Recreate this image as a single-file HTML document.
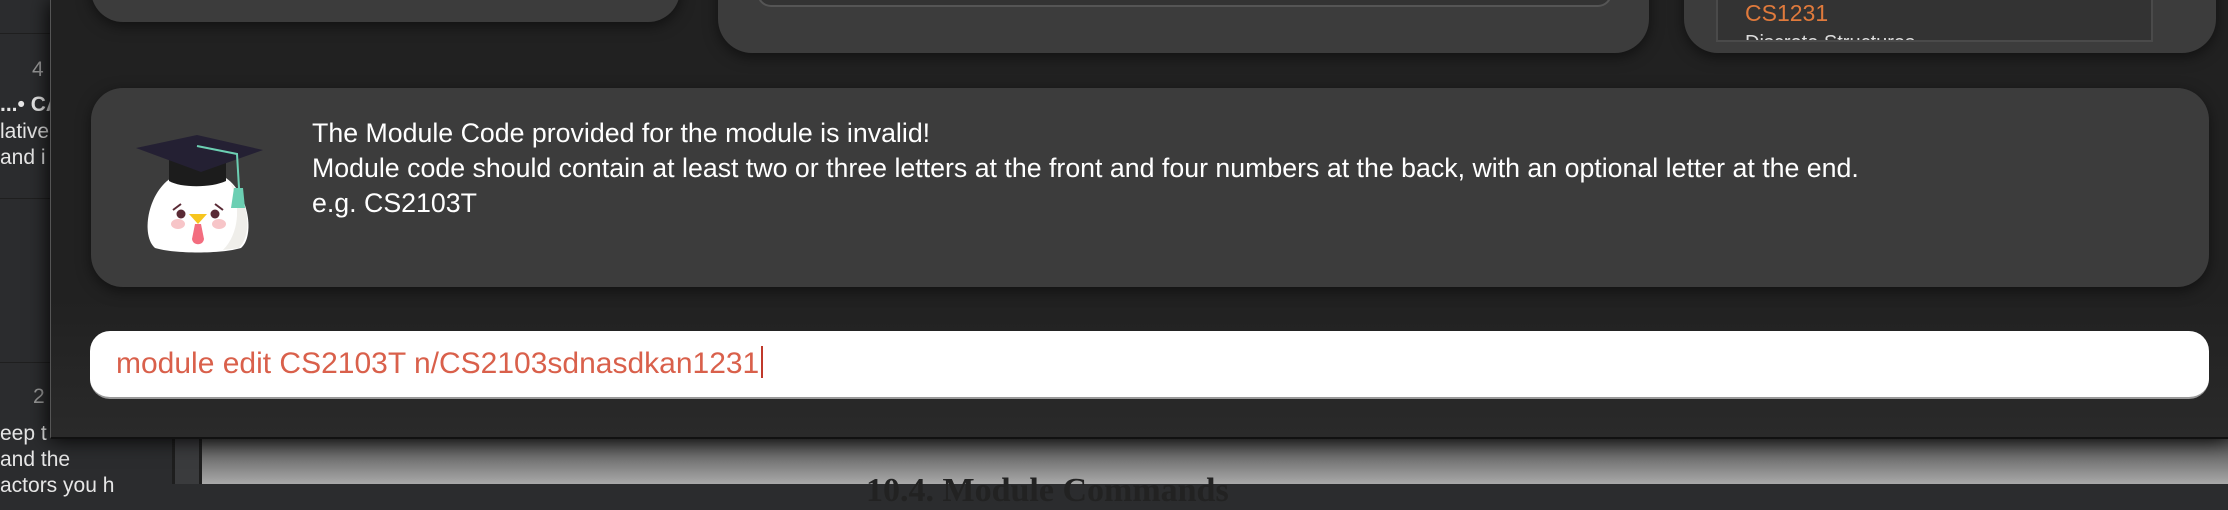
<!DOCTYPE html>
<html><head><meta charset="utf-8"><style>
*{margin:0;padding:0;box-sizing:border-box}
body{width:2228px;height:484px;overflow:hidden;background:#2b2c2e;position:relative;font-family:"Liberation Sans",sans-serif}
.abs{position:absolute}
.side{left:0;top:0;width:172px;height:484px;background:#2b2c2e;color:#e6e6e6;font-size:21px}
.bottom{left:202px;top:439px;width:2026px;height:45px;background:linear-gradient(#4a4a4a,#a9a9a9)}
.col{left:172px;top:439px;width:30px;height:45px;background:#3a3b3d;border-left:3px solid #1e1e1e;border-right:3px solid #1e1e1e}
.win{left:50px;top:0;width:2178px;height:439px;background:linear-gradient(#212121 0,#212121 300px,#2a2a2a 439px);border-left:1px solid #555;border-bottom:2px solid #111;box-shadow:0 0 20px #000}
.card{background:#3c3c3c;box-shadow:0 4px 14px rgba(0,0,0,.5)}
.txt{color:#fff;font-size:27px;line-height:35px;white-space:nowrap;transform-origin:0 0;transform:scaleX(.99)}
</style></head><body>
<div class="abs side">
 <div class="abs" style="left:0;top:33px;width:172px;height:1px;background:#1f1f1f"></div>
 <div class="abs" style="left:0;top:198px;width:172px;height:1px;background:#1f1f1f"></div>
 <div class="abs" style="left:0;top:362px;width:172px;height:1px;background:#1f1f1f"></div>
 <div class="abs" style="left:32px;top:58px;color:#999">4</div>
 <div class="abs" style="left:0;top:93px;font-weight:bold">...• CA</div>
 <div class="abs" style="left:0;top:120px">lative</div>
 <div class="abs" style="left:0;top:146px">and i</div>
 <div class="abs" style="left:33px;top:385px;color:#999">2</div>
 <div class="abs" style="left:0;top:422px">eep t</div>
 <div class="abs" style="left:0;top:448px">and the</div>
 <div class="abs" style="left:0;top:474px">actors you h</div>
</div>
<div class="abs col"></div>
<div class="abs bottom"></div>
<div class="abs" style="left:866px;top:472px;font-family:'Liberation Serif',serif;font-weight:bold;font-size:34px;color:#222">10.4. Module Commands</div>
<div class="abs win">
 <div class="abs card" style="left:40px;top:-40px;width:589px;height:62px;border-radius:0 0 32px 32px"></div>
 <div class="abs card" style="left:667px;top:-40px;width:931px;height:93px;border-radius:0 0 34px 34px">
  <div class="abs" style="left:39px;top:0;width:855px;height:47px;border:2px solid #555;border-top:none;border-radius:0 0 14px 14px;background:#333"></div>
 </div>
 <div class="abs card" style="left:1633px;top:-40px;width:532px;height:93px;border-radius:0 0 34px 34px">
  <div class="abs" style="left:32px;top:0;width:437px;height:82px;border:2px solid #4a4a4a;border-top:none;background:#333;overflow:hidden">
   <div class="abs" style="left:27px;top:40px;color:#e07a3c;font-size:23px">CS1231</div>
   <div class="abs" style="left:27px;top:72px;color:#ddd;font-size:20px">Discrete Structures</div>
  </div>
 </div>
 <div class="abs card" style="left:40px;top:88px;width:2118px;height:199px;border-radius:32px">
  <svg class="abs" style="left:40px;top:38px" width="140" height="135" viewBox="0 0 140 135">
   <path d="M24 122 C10 110 16 68 40 52 L95 52 C118 68 124 110 110 122 C90 128 44 128 24 122 Z" fill="#fff"/>
   <path d="M100 58 C118 75 122 108 108 122 L92 124 C108 108 110 80 100 58Z" fill="#efeeea"/>
   <path d="M38 30 L95 30 L95 55 C80 62 50 62 38 55 Z" fill="#1c1c1c"/>
   <path d="M5 22 L66 9 L132 24 L70 46 Z" fill="#242033"/>
   <path d="M66 20 L106 28 L108 62" stroke="#6ccfb3" stroke-width="2" fill="none"/>
   <path d="M103 62 L112 62 L114 82 L100 82 Z" fill="#6ccfb3"/>
   <circle cx="50" cy="88" r="4.5" fill="#5a2a35"/><circle cx="84" cy="88" r="4.5" fill="#5a2a35"/>
   <path d="M42 84 L50 78 M84 78 L92 84" stroke="#5a2a35" stroke-width="2"/>
   <ellipse cx="47" cy="98" rx="7" ry="5" fill="#f7c5c8"/><ellipse cx="88" cy="98" rx="7" ry="5" fill="#f7c5c8"/>
   <path d="M58 88 L76 88 L67 98Z" fill="#f7c51e"/>
   <path d="M64 98 L70 98 L73 113 C72 120 62 120 61 113Z" fill="#f36d7f"/>
  </svg>
  <div class="abs txt" style="left:221px;top:28px">The Module Code provided for the module is invalid!<br>Module code should contain at least two or three letters at the front and four numbers at the back, with an optional letter at the end.<br>e.g. CS2103T</div>
 </div>
 <div class="abs" style="left:39px;top:331px;width:2119px;height:68px;background:#fff;border-radius:20px;border-bottom:2px solid #999">
  <div class="abs" style="left:26px;top:15px;color:#d9604b;font-size:30px;white-space:nowrap;transform-origin:0 0;transform:scaleX(1)">module edit CS2103T n/CS2103sdnasdkan1231<span style="display:inline-block;width:2px;height:32px;background:#c0392b;vertical-align:-5px;margin-left:2px"></span></div>
 </div>
</div>
</body></html>
